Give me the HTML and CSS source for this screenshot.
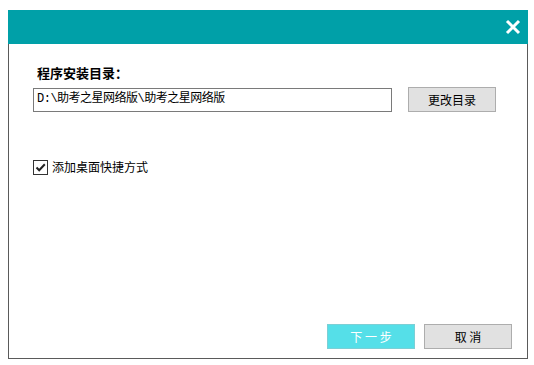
FILE: index.html
```html
<!DOCTYPE html>
<html lang="zh-CN">
<head>
  <meta charset="UTF-8" />
  <title>助考之星网络版 安装</title>
  <link rel="stylesheet" href="styles.css">
</head>
<body>
  <div class="window">
    <div class="titlebar">
      <span class="close">
        <svg width="16" height="16" viewBox="0 0 16 16"><path d="M2 2 L14 14 M14 2 L2 14" stroke="#fff" stroke-width="3" stroke-linecap="butt"/></svg>
      </span>
    </div>
    <div class="content">
      <div class="label">程序安装目录：</div>
      <div class="dir-row">
        <div class="path">D:\助考之星网络版\助考之星网络版</div>
        <button class="btn">更改目录</button>
      </div>
      <label class="check">
        <span class="box">
          <svg width="13" height="13" viewBox="0 0 13 13"><path d="M2.5 6.5 L5.2 9.3 L10.8 3.2" stroke="#222" stroke-width="2" fill="none"/></svg>
        </span>
        添加桌面快捷方式
      </label>
    </div>
    <div class="footer">
      <button class="btn next">下 一 步</button>
      <button class="btn">取 消</button>
    </div>
  </div>
</body>
</html>
```

FILE: styles.css
```css
body {
  margin: 0; background: #fff;
  font-family: "Noto Sans CJK SC", "DejaVu Sans", sans-serif; font-size: 12px; color: #000;
}
.window {
  margin: 10px 0 0 8px; width: 518px; height: 348px;
  border: 1px solid #5a5a5a; border-top: none;
  display: flex; flex-direction: column;
}
.titlebar {
  height: 34px; background: #00a0a8;
  display: flex; align-items: center; justify-content: flex-end;
  padding-right: 7px; margin: 0 -1px;
}
.close { display: flex; width: 16px; height: 16px; }
.content { flex: 1; padding: 20px 0 0 24px; }
.label { font-weight: bold; font-size: 13px; line-height: 17px; margin-left: 4px; }
.dir-row { display: flex; align-items: center; margin-top: 6px; }
.path {
  width: 354px; height: 22px; border: 1px solid #7a7a7a; box-sizing: content-box;
  line-height: 20px; padding-left: 3px; font-family: "Liberation Mono", "Noto Sans CJK SC", monospace;
  font-size: 12px; letter-spacing: -0.5px;
}
.btn {
  width: 88px; height: 25px; background: #e1e1e1; border: 1px solid #adadad;
  font-family: inherit; font-size: 12px; color: #000; padding: 0;
}
.dir-row .btn { margin-left: 16px; }
.check { display: flex; align-items: center; margin-top: 47px; line-height: 16px; }
.box {
  width: 13px; height: 13px; border: 1px solid #333; margin-right: 4px; display: flex;
}
.footer { display: flex; justify-content: flex-end; gap: 9px; padding: 0 15px 9px 0; }
.next { background: #55dfe8; border-color: #7ccfd5; color: #fff; }
```
